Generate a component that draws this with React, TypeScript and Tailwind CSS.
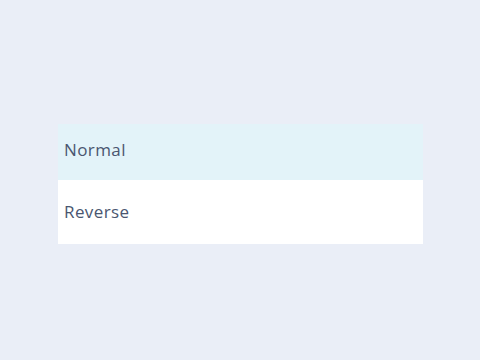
export default function App() {
  const options = ["Normal", "Reverse"];
  const selected = "Normal";

  return (
    <div className="flex h-[360px] w-[480px] items-start bg-[#eaeef7] pl-[58px] pt-[124px]" style={{ fontFamily: '"Open Sans", sans-serif' }}>
      <ul className="w-[365px] bg-white">
        {options.map((o, i) => (
          <li
            key={o}
            className={`flex items-center px-[6px] text-[17px] tracking-[0.4px] text-[#4a5670] ${i === 0 ? "h-[56px] pb-[5px]" : "h-[64px]"} ${o === selected ? "bg-[#e3f3f9]" : "bg-white"}`}
          >
            {o}
          </li>
        ))}
      </ul>
    </div>
  );
}
